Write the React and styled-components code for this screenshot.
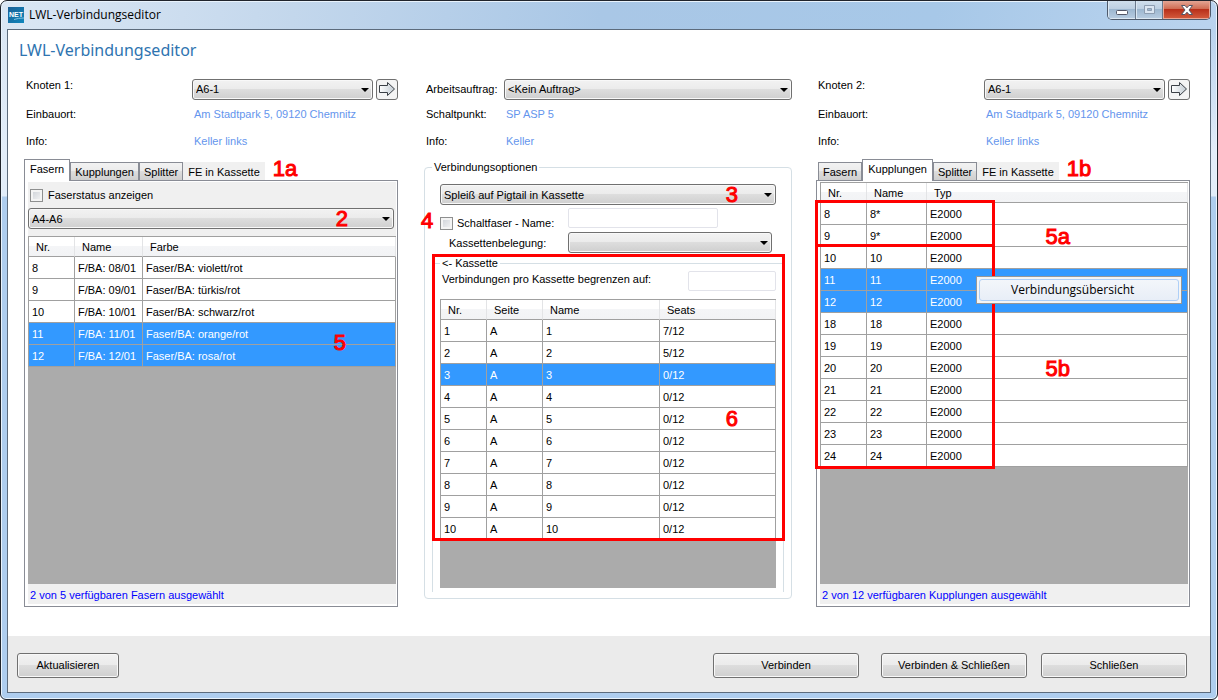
import styled, { createGlobalStyle } from "styled-components";

const fibres = [
  ["8", "F/BA: 08/01", "Faser/BA: violett/rot"],
  ["9", "F/BA: 09/01", "Faser/BA: türkis/rot"],
  ["10", "F/BA: 10/01", "Faser/BA: schwarz/rot"],
  ["11", "F/BA: 11/01", "Faser/BA: orange/rot"],
  ["12", "F/BA: 12/01", "Faser/BA: rosa/rot"],
];

const cassettes = [
  ["1", "A", "1", "7/12"],
  ["2", "A", "2", "5/12"],
  ["3", "A", "3", "0/12"],
  ["4", "A", "4", "0/12"],
  ["5", "A", "5", "0/12"],
  ["6", "A", "6", "0/12"],
  ["7", "A", "7", "0/12"],
  ["8", "A", "8", "0/12"],
  ["9", "A", "9", "0/12"],
  ["10", "A", "10", "0/12"],
];

const couplings = [
  ["8", "8*", "E2000"],
  ["9", "9*", "E2000"],
  ...["10", "11", "12", "18", "19", "20", "21", "22", "23", "24"].map((nr) => [nr, nr, "E2000"]),
];

const tabNames = ["Fasern", "Kupplungen", "Splitter", "FE in Kassette"];

export default function App() {
  return (
    <>
      <GlobalStyle />
      <Window>
        <TitleBar>
          <AppIcon />
          <WindowTitle>LWL-Verbindungseditor</WindowTitle>
          <WindowControls />
        </TitleBar>
        <Client>
          <Content>
            <Heading>LWL-Verbindungseditor</Heading>
            <Columns>
              <Column>
                <NodeInfo number="1" />
                <Tabs active="Fasern" mark="1a" />
                <TabPage>
                  <CheckRow>
                    <CheckBox id="status" type="checkbox" />
                    <label htmlFor="status">Faserstatus anzeigen</label>
                  </CheckRow>
                  <CableRow>
                    <Dropdown label="Kabel" value="A4-A6" />
                    <Mark $top={0} $right={48}>2</Mark>
                  </CableRow>
                  <GridArea>
                    <DataTable
                      widths={[46, 68]}
                      head={["Nr.", "Name", "Farbe"]}
                      rows={fibres}
                      selected={["11", "12"]}
                    />
                    <Mark $top={95} $right={50}>5</Mark>
                  </GridArea>
                  <Status>2 von 5 verfügbaren Fasern ausgewählt</Status>
                </TabPage>
              </Column>
              <MiddleColumn>
                <Info $label={78}>
                  <InfoRow>
                    <label htmlFor="order">Arbeitsauftrag:</label>
                    <Dropdown id="order" value="<Kein Auftrag>" />
                  </InfoRow>
                  <InfoRow>
                    <span>Schaltpunkt:</span>
                    <InfoValue>SP ASP 5</InfoValue>
                  </InfoRow>
                  <InfoRow>
                    <span>Info:</span>
                    <InfoValue>Keller</InfoValue>
                  </InfoRow>
                </Info>
                <OptionsGroup>
                  <legend>Verbindungsoptionen</legend>
                  <ModeRow>
                    <Dropdown label="Verbindungsart" value="Spleiß auf Pigtail in Kassette" />
                    <Mark $top={0} $right={38}>3</Mark>
                  </ModeRow>
                  <PatchRow>
                    <CheckBox id="patch" type="checkbox" />
                    <label htmlFor="patch">Schaltfaser - Name:</label>
                    <NameInput aria-label="Schaltfaser - Name" />
                    <Mark $top={2} $left={-11}>4</Mark>
                  </PatchRow>
                  <UsageRow>
                    <label htmlFor="usage">Kassettenbelegung:</label>
                    <Dropdown id="usage" value="" />
                  </UsageRow>
                  <CassetteGroup>
                    <legend>&lt;- Kassette</legend>
                    <LimitRow>
                      <label htmlFor="limit">Verbindungen pro Kassette begrenzen auf:</label>
                      <LimitInput id="limit" />
                    </LimitRow>
                    <GridArea>
                      <DataTable
                        widths={[46, 56, 117]}
                        head={["Nr.", "Seite", "Name", "Seats"]}
                        rows={cassettes}
                        selected={["3"]}
                      />
                      <Mark $top={108} $right={38}>6</Mark>
                    </GridArea>
                    <CassetteFrame />
                  </CassetteGroup>
                </OptionsGroup>
              </MiddleColumn>
              <Column>
                <NodeInfo number="2" />
                <Tabs active="Kupplungen" mark="1b" />
                <TabPage>
                  <GridArea>
                    <DataTable
                      widths={[46, 60]}
                      head={["Nr.", "Name", "Typ"]}
                      rows={couplings}
                      selected={["11", "12"]}
                    />
                    <CouplingFrame $top={17} $height={47} />
                    <CouplingFrame $top={61} $height={225} />
                    <Mark $top={43} $right={118}>5a</Mark>
                    <Mark $top={175} $right={118}>5b</Mark>
                    <ContextMenu>
                      <MenuItem type="button">Verbindungsübersicht</MenuItem>
                    </ContextMenu>
                  </GridArea>
                  <Status>2 von 12 verfügbaren Kupplungen ausgewählt</Status>
                </TabPage>
              </Column>
            </Columns>
          </Content>
          <Footer>
            <PushButton type="button" $small>Aktualisieren</PushButton>
            <FooterActions>
              <PushButton type="button">Verbinden</PushButton>
              <ClosingActions>
                <PushButton type="button">Verbinden &amp; Schließen</PushButton>
                <PushButton type="button">Schließen</PushButton>
              </ClosingActions>
            </FooterActions>
          </Footer>
        </Client>
      </Window>
    </>
  );
}

function AppIcon() {
  return (
    <svg width="16" height="16" viewBox="0 0 16 16" aria-hidden="true">
      <defs>
        <linearGradient id="app" x1="0" y1="0" x2="1" y2="1">
          <stop offset="0" stopColor="#1b5f95" />
          <stop offset="1" stopColor="#0f87bd" />
        </linearGradient>
      </defs>
      <rect width="16" height="16" fill="url(#app)" />
      <text x="1" y="10" fontFamily="Liberation Sans" fontWeight="bold" fontSize="7" fill="#fff">NET</text>
      <path d="M6 12.500Q10 11 16 11" stroke="#7fc1e2" fill="none" />
    </svg>
  );
}

function WindowControls() {
  return (
    <Controls>
      <ControlButton type="button" aria-label="Minimieren" $width={28}>
        <svg width="14" height="12" viewBox="0 0 14 12">
          <rect x="1.500" y="6.500" width="11" height="4" rx="1" fill="#fff" stroke="#535666" />
        </svg>
      </ControlButton>
      <ControlButton type="button" aria-label="Maximieren" $width={27} disabled>
        <svg width="14" height="12" viewBox="0 0 14 12">
          <path d="M1.500 1.500h10v8h-10zM4.500 4.500h4v2h-4z" fill="#dbe6f2" fillRule="evenodd" stroke="#8d9db1" />
        </svg>
      </ControlButton>
      <ControlButton type="button" aria-label="Schließen" $width={47} $close>
        <svg width="14" height="12" viewBox="0 0 14 12">
          <path d="M1.500 1.500h3.500l2 2.300 2-2.300h3.500L9 6l3.500 4.500H9L7 8.200 5 10.500H1.500L5 6z" fill="#fff" stroke="#535666" />
        </svg>
      </ControlButton>
    </Controls>
  );
}

function NodeInfo({ number }) {
  const id = `node${number}`;
  return (
    <Info $label={166}>
      <InfoRow>
        <NodeLabel htmlFor={id}>Knoten {number}:</NodeLabel>
        <Dropdown id={id} value="A6-1" />
        <GoButton type="button" aria-label={`Zu Knoten ${number}`}>
          <svg width="18" height="14" viewBox="0 0 18 14">
            <defs>
              <linearGradient id={`arrow${number}`}>
                <stop offset="0" stopColor="#fff" />
                <stop offset="1" stopColor="#c3ccd3" />
              </linearGradient>
            </defs>
            <path d="M1.500 3.500h8v-3L16.500 7l-7 6.500v-3h-8z" fill={`url(#arrow${number})`} stroke="#3b4046" />
          </svg>
        </GoButton>
      </InfoRow>
      <InfoRow>
        <span>Einbauort:</span>
        <InfoValue>Am Stadtpark 5, 09120 Chemnitz</InfoValue>
      </InfoRow>
      <InfoRow>
        <span>Info:</span>
        <InfoValue>Keller links</InfoValue>
      </InfoRow>
    </Info>
  );
}

function Tabs({ active, mark }) {
  return (
    <TabList $inset={active !== tabNames[0]}>
      {tabNames.map((name, index) => (
        <Tab key={name} type="button" $active={name === active} $flat={index === 3}>
          {name}
        </Tab>
      ))}
      <TabMark>{mark}</TabMark>
    </TabList>
  );
}

function Dropdown({ id, label, value }) {
  return (
    <SelectBox>
      <Select id={id} aria-label={label} defaultValue={value}>
        <option value={value}>{value}</option>
      </Select>
      <SelectArrow width="8" height="4" viewBox="0 0 8 4">
        <path d="M0 0h8L4 4z" />
      </SelectArrow>
    </SelectBox>
  );
}

function DataTable({ widths, head, rows, selected }) {
  return (
    <Table>
      <colgroup>
        {head.map((name, index) => <Col key={name} $width={widths[index]} />)}
      </colgroup>
      <thead>
        <tr>
          {head.map((name) => <HeadCell key={name}>{name}</HeadCell>)}
        </tr>
      </thead>
      <tbody>
        {rows.map((row) => (
          <Row key={row[0]} $selected={selected.includes(row[0])}>
            {row.map((text, index) => <Cell key={index}>{text}</Cell>)}
          </Row>
        ))}
      </tbody>
    </Table>
  );
}

const GlobalStyle = createGlobalStyle`
    * {
        box-sizing: border-box;
    }
    body {
        margin: 0;
        background: #fff;
        font: 11px/16px "Liberation Sans", Arial, sans-serif;
        color: #000;
    }
    button, input, select {
        font: inherit;
        color: inherit;
        margin: 0;
    }
`;

const Window = styled.div`
    display: flex;
    flex-direction: column;
    min-height: 100vh;
    padding: 0 6px 6px;
    border: 1px solid #20242c;
    border-radius: 7px 7px 6px 6px;
    background:
        linear-gradient(transparent 30px, #e2edf9 150px, #e2edf9 195px, #aecdee 196px),
        linear-gradient(100deg, #dbe7f4 0, #c3d7ec 22%, #a9c7e6 45%, #a7c8e8 70%, #b9d3ee 90%, #bfd6ee 100%);
    box-shadow: inset 0 0 0 1px #e9f3fc;
`;

const TitleBar = styled.header`
    display: flex;
    align-items: center;
    gap: 5px;
    height: 28px;
    padding-left: 1px;
    font: 12px/16px "Open Sans", "Segoe UI", sans-serif;
`;

const WindowTitle = styled.span`
    flex: 1;
`;

const Controls = styled.div`
    display: flex;
    align-self: flex-start;
    border: 1px solid #4e5a6b;
    border-top: 0;
    border-radius: 0 0 5px 5px;
    overflow: hidden;
`;

const ControlButton = styled.button`
    display: flex;
    align-items: center;
    justify-content: center;
    width: ${({ $width }) => $width}px;
    height: 18px;
    padding: 0;
    border: 1px solid ${({ $close }) => ($close ? "#eaa593" : "#dce8f3")};
    border-top: 0;
    background: ${({ $close }) =>
      $close
        ? "linear-gradient(#e3a594, #cf6a50 48%, #b8301a 50%, #d2583a)"
        : "linear-gradient(#cfdeec, #bccfe2 48%, #9db7d0 50%, #b6cbe0)"};

    & + & {
        box-shadow: -1px 0 0 #6b7a8d;
    }
`;

const Client = styled.div`
    display: flex;
    flex: 1;
    flex-direction: column;
    border: 1px solid #5c6b7c;
    background: #fff;
`;

const Content = styled.main`
    display: flex;
    flex: 1;
    flex-direction: column;
    padding: 10px 20px 29px 16px;
`;

const Heading = styled.h1`
    margin: 0 0 18px -5px;
    font: 16px/20px "Noto Sans", "Segoe UI", sans-serif;
    color: #2e74b0;
`;

const Columns = styled.div`
    display: grid;
    flex: 1;
    grid-template-columns: 374fr 370fr 374fr;
    gap: 24px;
`;

const Column = styled.section`
    display: flex;
    flex-direction: column;
    min-width: 0;
`;

const MiddleColumn = styled(Column)`
    margin: 0 0 8px 2px;
`;

const Info = styled.div`
    display: grid;
    grid-template-rows: 22px 28px 26px;
    padding-left: 2px;

    & > div > :first-child {
        width: ${({ $label }) => $label}px;
        flex: none;
    }
`;

const InfoRow = styled.div`
    display: flex;
    align-items: center;
`;

const NodeLabel = styled.label`
    align-self: flex-start;
    line-height: 14px;
`;

const InfoValue = styled.span`
    padding-left: 2px;
    color: #6495ed;
`;

const SelectBox = styled.div`
    position: relative;
    flex: 1;
    min-width: 0;
`;

const Select = styled.select`
    display: block;
    width: 100%;
    height: 21px;
    padding: 0 20px 0 3px;
    appearance: none;
    border: 1px solid #707070;
    border-radius: 3px;
    background: linear-gradient(#f2f2f2, #ebebeb 48%, #dddddd 50%, #cfcfcf);
    box-shadow: inset 0 0 0 1px #f8f8f8;
`;

const SelectArrow = styled.svg`
    position: absolute;
    top: 9px;
    right: 4px;
    pointer-events: none;
`;

const GoButton = styled.button`
    display: flex;
    align-items: center;
    justify-content: center;
    width: 22px;
    height: 21px;
    margin-left: 3px;
    padding: 0;
    border: 1px solid #707070;
    border-radius: 3px;
    background: #f4f4f4;
`;

const TabList = styled.div`
    display: flex;
    align-items: flex-end;
    height: 26px;
    padding-left: ${({ $inset }) => ($inset ? 2 : 0)}px;
`;

const Tab = styled.button`
    z-index: 1;
    height: ${({ $active }) => ($active ? 22 : 18)}px;
    margin-bottom: ${({ $active }) => ($active ? -1 : 0)}px;
    padding: 0 4px;
    border: 1px solid #898c95;
    border-bottom: 0;
    background: linear-gradient(#f2f2f2, #ebebeb 48%, #dddddd 50%, #cfcfcf);

    ${({ $active }) => $active && "background: #fff; padding: 0 5px 3px;"}
    ${({ $flat }) => $flat && "background: #f0f0f0; border-color: #f0f0f0;"}
`;

const TabPage = styled.div`
    display: flex;
    flex: 1;
    flex-direction: column;
    padding: 1px 1px 2px 3px;
    border: 1px solid #898c95;
    background: #fff;
`;

const CheckRow = styled.div`
    display: flex;
    align-items: center;
    gap: 5px;
    height: 26px;
    padding-left: 2px;
    background: #f0f0f0;
`;

const CheckBox = styled.input`
    width: 13px;
    height: 13px;
    appearance: none;
    border: 1px solid #8e8f8f;
    background: linear-gradient(135deg, #cbcfd5, #f6f6f6);
    box-shadow: inset 0 0 0 2px #f4f4f4;
`;

const CableRow = styled.div`
    position: relative;
    height: 28px;
    padding-right: 2px;
    background: #f0f0f0;
`;

const GridArea = styled.div`
    position: relative;
    flex: 1;
    border-top: 1px solid #a0a0a0;
    background: #ababab;
`;

const Table = styled.table`
    width: 100%;
    table-layout: fixed;
    border-collapse: separate;
    border-spacing: 0;
    border-left: 1px solid #a0a0a0;
`;

const Col = styled.col`
    width: ${({ $width }) => ($width ? `${$width}px` : "auto")};
`;

const HeadCell = styled.th`
    height: 20px;
    padding: 0 7px;
    border-right: 1px solid #e3e4e6;
    border-bottom: 1px solid #a0a0a0;
    background: linear-gradient(#fff 45%, #f4f5f7 50%, #f2f3f5);
    font-weight: normal;
    text-align: left;
`;

const Row = styled.tr`
    background: ${({ $selected }) => ($selected ? "#3399ff" : "#fff")};
    color: ${({ $selected }) => ($selected ? "#fff" : "#000")};
`;

const Cell = styled.td`
    height: 22px;
    padding: 0 3px;
    border-right: 1px solid #a0a0a0;
    border-bottom: 1px solid #a0a0a0;
    white-space: nowrap;
`;

const Status = styled.div`
    height: 20px;
    padding: 3px 2px;
    background: #f0f0f0;
    color: #0000ff;
`;

const OptionsGroup = styled.fieldset`
    display: flex;
    flex: 1;
    flex-direction: column;
    min-width: 0;
    margin: 5px 0 0;
    padding: 9px 7px 6px;
    border: 1px solid #d5dfe5;
    border-radius: 4px;

    & > legend {
        padding: 0 2px;
    }
`;

const ModeRow = styled.div`
    position: relative;
    margin: 0 8px 3px;
`;

const TextInput = styled.input`
    height: 20px;
    border: 1px solid #e2e3ea;
    border-radius: 2px;
    background: #fff;
`;

const NameInput = styled(TextInput)`
    align-self: flex-start;
    width: 150px;
`;

const PatchRow = styled.div`
    position: relative;
    display: flex;
    align-items: flex-end;
    gap: 4px;
    height: 22px;
    margin-bottom: 2px;
    padding: 0 12px 0 8px;

    & > label {
        width: 107px;
        line-height: 14px;
    }
`;

const UsageRow = styled.div`
    display: flex;
    align-items: center;
    height: 21px;
    padding: 0 12px 0 17px;

    & > label {
        width: 119px;
    }
`;

const CassetteGroup = styled.fieldset`
    position: relative;
    display: flex;
    flex: 1;
    flex-direction: column;
    min-width: 0;
    margin: 2px 0 0;
    padding: 0 7px 4px;
    border: 1px solid #d5dfe5;
    border-bottom: 0;

    & > legend {
        padding: 0 2px;
    }
`;

const LimitRow = styled.div`
    display: flex;
    justify-content: space-between;
    height: 28px;
    padding-left: 2px;
`;

const LimitInput = styled(TextInput)`
    width: 88px;
`;

const Frame = styled.div`
    position: absolute;
    border: 3px solid #ff0000;
    pointer-events: none;
`;

const CassetteFrame = styled(Frame)`
    top: -17px;
    right: -2px;
    bottom: 51px;
    left: -1px;
`;

const CouplingFrame = styled(Frame)`
    top: ${({ $top }) => $top}px;
    left: -5px;
    width: 180px;
    height: ${({ $height }) => $height}px;
`;

const TabMark = styled.span`
    margin-left: 8px;
    font-size: 22px;
    line-height: 22px;
    -webkit-text-stroke: 1px #ff0000;
    color: #ff0000;
`;

const Mark = styled(TabMark)`
    position: absolute;
    top: ${({ $top }) => $top}px;
    left: ${({ $left }) => ($left === undefined ? "auto" : `${$left}px`)};
    right: ${({ $right }) => ($right === undefined ? "auto" : `${$right}px`)};
    margin: 0;
    pointer-events: none;
`;

const ContextMenu = styled.div`
    position: absolute;
    top: 93px;
    right: 6px;
    width: 206px;
    padding: 2px;
    border: 1px solid #979797;
    background: #f5f5f5;
`;

const MenuItem = styled.button`
    display: block;
    width: 100%;
    height: 22px;
    padding: 0 0 0 31px;
    border: 1px solid #aecff7;
    border-radius: 3px;
    background: linear-gradient(#f3f6fa, #e8eef7);
    font: 12px/16px "Open Sans", "Segoe UI", sans-serif;
    text-align: left;
`;

const Footer = styled.footer`
    display: flex;
    align-items: center;
    justify-content: space-between;
    height: 56px;
    padding: 2px 23px 0 9px;
    background: #ebebeb;
`;

const FooterActions = styled.div`
    display: flex;
    gap: 22px;
`;

const ClosingActions = styled.div`
    display: flex;
    gap: 14px;
`;

const PushButton = styled.button`
    width: ${({ $small }) => ($small ? 102 : 146)}px;
    height: 25px;
    border: 1px solid #707070;
    border-radius: 3px;
    background: linear-gradient(#f2f2f2, #ebebeb 48%, #dddddd 50%, #cfcfcf);
    box-shadow: inset 0 0 0 1px #f8f8f8;
`;
